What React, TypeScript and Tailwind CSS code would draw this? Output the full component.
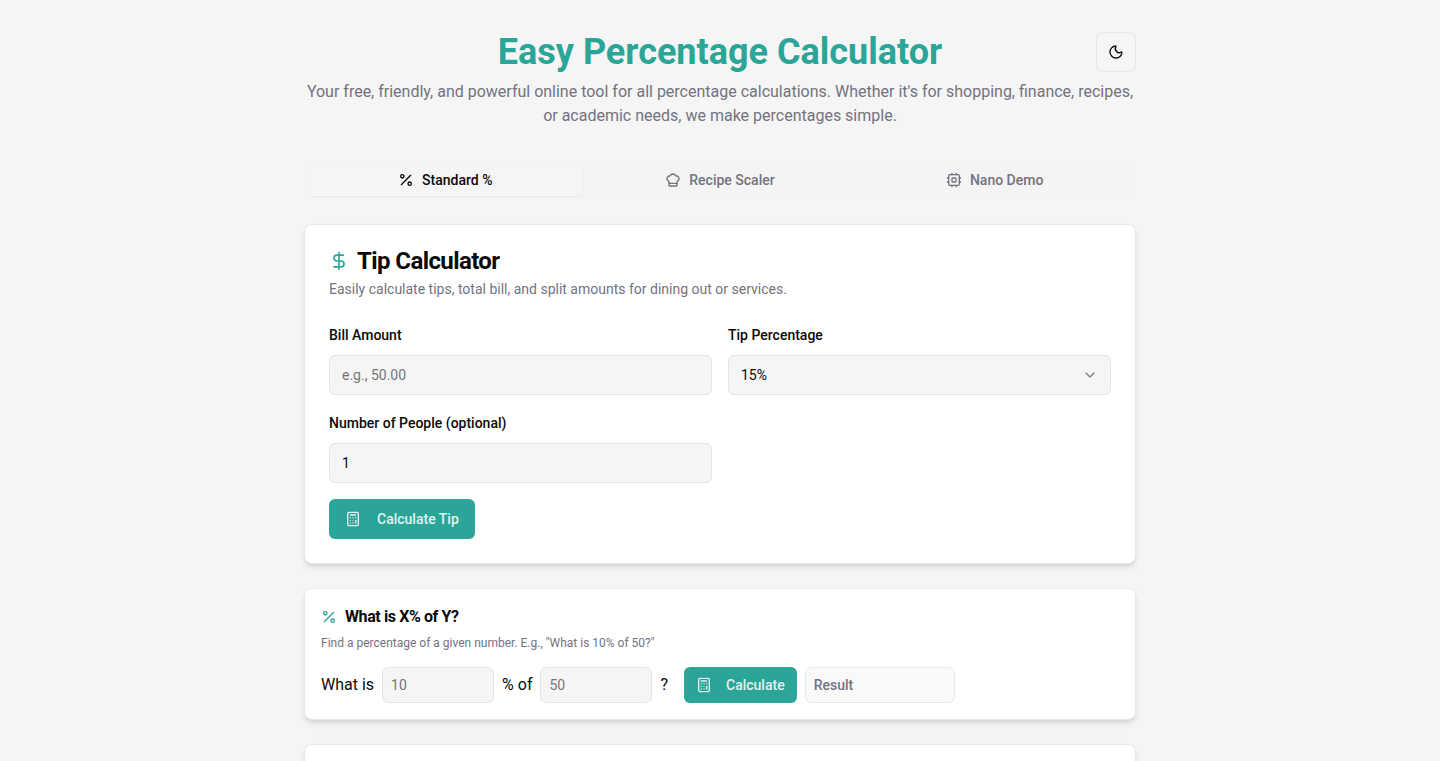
import React from "react";
import { Calculator, ChefHat, ChevronDown, DollarSign, Moon, Percent } from "lucide-react";

const inputClass =
  "h-10 w-full rounded-md border border-[#e5e5e5] bg-[#f5f5f5] px-3 text-sm text-[#0a0a0a] placeholder:text-[#757575] outline-none";

const smallInputClass =
  "h-9 w-28 rounded-md border border-[#e5e5e5] bg-[#f5f5f5] px-2 text-sm text-[#0a0a0a] placeholder:text-[#757575] outline-none";

// two pins per side, the package's Cpu has three
function ChipIcon() {
  return (
    <svg className="h-4 w-4" viewBox="0 0 24 24" fill="none" stroke="currentColor" strokeWidth={2} strokeLinecap="round" strokeLinejoin="round">
      <rect x="4" y="4" width="16" height="16" rx="2" />
      <rect x="9" y="9" width="6" height="6" rx="1" />
      <path d="M15 2v2M15 20v2M2 15h2M2 9h2M20 15h2M20 9h2M9 2v2M9 20v2" />
    </svg>
  );
}

export default function App() {
  return (
    <div className="min-h-screen bg-[#f5f5f5] font-['Roboto',sans-serif] text-[#0a0a0a]">
      <div className="mx-auto max-w-4xl px-8 py-8">
        {/* Header */}
        <header className="relative mb-8 text-center">
          <h1 className="text-4xl font-bold text-[#2aa598]">Easy Percentage Calculator</h1>
          <p className="mt-2 text-base text-[#73737f]">
            Your free, friendly, and powerful online tool for all percentage calculations. Whether it's for shopping, finance, recipes, or academic needs, we make percentages simple.
          </p>
          <button className="absolute right-0 top-0 flex h-10 w-10 items-center justify-center rounded-md border border-[#e8e8e8] bg-[#f5f5f5]">
            <Moon className="h-4 w-4" />
          </button>
        </header>

        {/* Tabs */}
        <div className="mb-6 grid h-10 grid-cols-3 rounded-md bg-[#f4f4f4] p-1">
          <button className="flex items-center justify-center gap-2 rounded-sm bg-[#f5f5f5] text-sm font-medium shadow-xs">
            <Percent className="h-4 w-4" />
            Standard %
          </button>
          <button className="flex items-center justify-center gap-2 text-sm font-medium text-[#73737f]">
            <ChefHat className="h-4 w-4" />
            Recipe Scaler
          </button>
          <button className="flex items-center justify-center gap-2 text-sm font-medium text-[#73737f]">
            <ChipIcon />
            Nano Demo
          </button>
        </div>

        {/* Tip calculator */}
        <section className="mb-6 rounded-lg border border-[#e8e8e8] bg-white p-6 shadow-md">
          <h2 className="flex items-center gap-2 text-2xl font-bold leading-none tracking-tight">
            <DollarSign className="h-5 w-5 text-[#2aa598]" />
            Tip Calculator
          </h2>
          <p className="mt-1.5 text-sm text-[#73737f]">
            Easily calculate tips, total bill, and split amounts for dining out or services.
          </p>

          <div className="mt-[26px] grid grid-cols-2 gap-x-4 gap-y-[18px]">
            <div>
              <label className="mb-2.5 block text-sm font-medium">Bill Amount</label>
              <input className={inputClass} placeholder="e.g., 50.00" />
            </div>
            <div>
              <label className="mb-2.5 block text-sm font-medium">Tip Percentage</label>
              <div className={`${inputClass} flex items-center justify-between`}>
                <span>15%</span>
                <ChevronDown className="h-4 w-4 opacity-50" />
              </div>
            </div>
            <div>
              <label className="mb-2.5 block text-sm font-medium">Number of People (optional)</label>
              <input className={inputClass} defaultValue="1" />
            </div>
          </div>

          <button className="mt-4 flex h-10 items-center gap-2 rounded-md bg-[#2aa598] px-4 text-sm font-medium text-[#e0f2f1]">
            <Calculator className="h-4 w-4 mr-2" />
            Calculate Tip
          </button>
        </section>

        {/* X% of Y */}
        <section className="mb-6 rounded-lg border border-[#e8e8e8] bg-white p-4 shadow-md">
          <h3 className="flex items-center gap-2 text-base font-bold tracking-tight">
            <Percent className="h-4 w-4 text-[#2aa598]" />
            What is X% of Y?
          </h3>
          <p className="mt-1.5 text-xs text-[#73737f]">
            Find a percentage of a given number. E.g., "What is 10% of 50?"
          </p>
          <div className="mt-4 flex items-center gap-2">
            <span>What is</span>
            <input className={smallInputClass} placeholder="10" />
            <span>% of</span>
            <input className={smallInputClass} placeholder="50" />
            <span className="mr-2">?</span>
            <button className="flex h-9 items-center gap-1.5 rounded-md bg-[#2aa598] px-3 text-sm font-medium text-[#e0f2f1]">
              <Calculator className="h-4 w-4 mr-2" />
              Calculate
            </button>
            <div className="flex h-9 w-[150px] items-center rounded-md border border-[#e8e8e8] bg-[#f9f9f9] px-2 text-sm font-medium text-[#73737f]">
              Result
            </div>
          </div>
        </section>

        {/* Next card, cut off by the window */}
        <section className="h-40 rounded-lg border border-[#e8e8e8] bg-white p-4 shadow-md" />
      </div>
    </div>
  );
}
